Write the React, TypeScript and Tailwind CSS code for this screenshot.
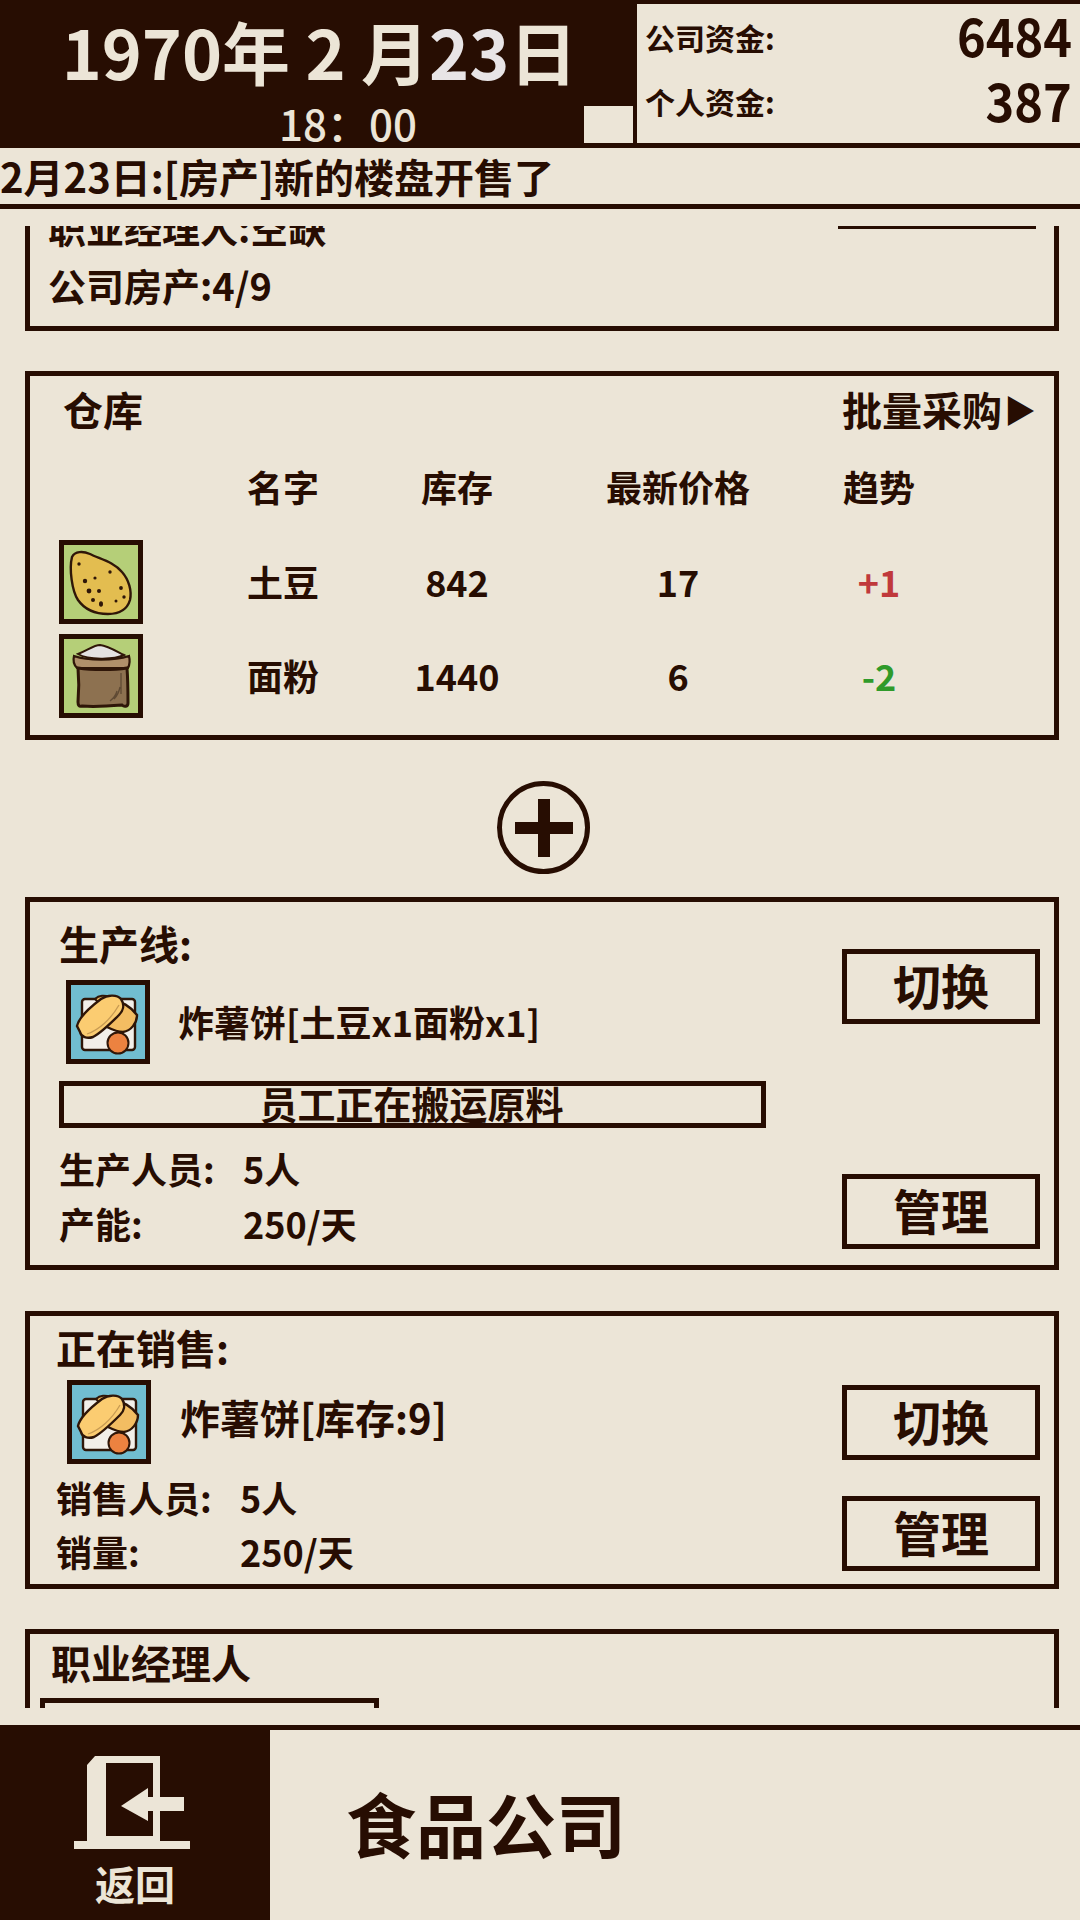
import React from 'react';

// --- ITEM ICONS ---
const Potato = () => (
  <svg viewBox="0 0 74 74" className="block h-full w-full">
    <rect width="74" height="74" fill="#b5cf78" />
    <path d="M8 12 C11 6 19 6 26 9 C36 14 50 17 58 27 C65 35 68 46 66 55 C63 65 54 69 44 69 C32 69 21 65 14 55 C8 46 5 24 8 12 Z" fill="#e3bd50" stroke="#2f1608" strokeWidth="2.4" />
    <g fill="#2f1608">
      <circle cx="15" cy="19" r="1.7" /><circle cx="46" cy="27" r="1.7" /><circle cx="31" cy="33" r="1.6" />
      <circle cx="21" cy="36" r="2.2" /><circle cx="57" cy="43" r="1.9" /><circle cx="35" cy="46" r="2" />
      <circle cx="25" cy="46" r="2.4" /><circle cx="60" cy="52" r="1.7" /><circle cx="29" cy="55" r="2" />
      <circle cx="52" cy="56" r="1.5" /><ellipse cx="37" cy="59" rx="2" ry="2.8" />
    </g>
  </svg>
);

const Sack = () => (
  <svg viewBox="0 0 74 74" className="block h-full w-full">
    <rect width="74" height="74" fill="#b5cf78" />
    <path d="M14 15 C24 11 30 6 36 6 C44 7 52 12 60 16 C50 21 24 21 14 15 Z" fill="#e4e2e2" stroke="#2f1608" strokeWidth="2" />
    <path d="M10 17 C24 22 50 22 65 17 C66 21 66 25 64 29 L13 29 C10 26 9 21 10 17 Z" fill="#b0906a" stroke="#2f1608" strokeWidth="2.2" />
    <path d="M14 29 C28 31 50 31 63 29 C64 42 64 55 64 64 C64 68 60 68 58 66 C46 67 30 68 18 67 C15 68 14 66 14 63 C15 52 15 40 14 29 Z" fill="#8d7150" stroke="#2f1608" strokeWidth="3" />
    <path d="M57 34 L57 55 M50 60 C53 57 55 53 56 48 M46 62 C50 59 52 56 53 52" fill="none" stroke="#5f4a34" strokeWidth="1.3" />
  </svg>
);

const Fries = () => (
  <svg viewBox="0 0 74 74" className="block h-full w-full">
    <rect width="74" height="74" fill="#71bdd0" />
    <rect x="11" y="14" width="53" height="51" rx="3" fill="#f2efe9" stroke="#2f1608" strokeWidth="2.4" />
    <path d="M24 14 C28 10 34 10 38 12 L30 20 Z" fill="#f3bd62" stroke="#2f1608" strokeWidth="2" />
    <path d="M40 16 C50 15 60 22 66 30 C66 38 60 46 52 47 C46 47 40 44 36 42 Z" fill="#f3bd62" stroke="#2f1608" strokeWidth="2.4" />
    <path d="M6 41 C8 32 22 20 30 14 C36 10 46 9 50 14 C54 20 52 26 48 30 C40 38 30 48 22 52 C16 54 10 52 9 47 Z" fill="#fbcc71" stroke="#2f1608" strokeWidth="2.4" />
    <path d="M16 49 C28 45 40 34 48 20" fill="none" stroke="#c79a52" strokeWidth="1.3" />
    <circle cx="47" cy="58" r="10.5" fill="#ec8240" stroke="#2f1608" strokeWidth="2" />
  </svg>
);

const IconBox = ({ children, className = '' }: { children: React.ReactNode; className?: string }) => (
  <div className={`h-[84px] w-[84px] shrink-0 border-[5px] border-[#270d02] ${className}`}>{children}</div>
);

const ActionButton = ({ label }: { label: string }) => (
  <div className="flex h-[75px] w-[198px] items-center justify-center border-[5px] border-[#270d02] pb-[6px] text-[48px] leading-none font-bold">
    {label}
  </div>
);

const Card = ({ className = '', children }: { className?: string; children: React.ReactNode }) => (
  <div className={`mx-[25px] w-[1034px] border-[5px] border-[#270d02] ${className}`}>{children}</div>
);

const stockRows = [
  { icon: <Potato />, name: '土豆', stock: '842', price: '17', trend: '+1', color: 'text-[#c0393b]' },
  { icon: <Sack />, name: '面粉', stock: '1440', price: '6', trend: '-2', color: 'text-[#2f9a2a]' },
];

// --- MAIN ---
export default function App() {
  return (
    <div className="flex h-[1920px] w-[1080px] flex-col overflow-hidden bg-[#ece5d7] font-['Noto_Sans_CJK_SC',sans-serif] font-bold text-[#270d02]">
      {/* top date + money */}
      <div className="flex h-[148px] shrink-0 bg-[#270d02]">
        <div className="flex w-[584px] flex-col items-center text-[#ece5d7]">
          <div className="mt-[7px] ml-[55px] h-[88px] text-[68px] leading-[88px] whitespace-nowrap">1970年 2 月<span className="text-[#e8e4e6]">23</span>日</div>
          <div className="mt-[4px] ml-[112px] text-[42px] leading-[48px] font-medium whitespace-nowrap">18：00</div>
        </div>
        <div className="mt-[106px] h-[37px] w-[49px] bg-[#ece5d7]" />
        <div className="mt-[4px] mb-[5px] ml-[4px] flex w-[443px] flex-col bg-[#ece5d7] pr-[8px] pl-[8px]">
          <div className="mt-[1px] flex h-[64px] items-center justify-between">
            <span className="text-[30px]">公司资金:</span>
            <span className="origin-right -translate-y-[3px] scale-x-[0.92] text-[53px] leading-none">6484</span>
          </div>
          <div className="flex h-[64px] items-center justify-between">
            <span className="text-[30px]">个人资金:</span>
            <span className="origin-right -translate-y-[2px] scale-x-[0.92] text-[53px] leading-none">387</span>
          </div>
        </div>
      </div>

      {/* news */}
      <div className="flex h-[61px] shrink-0 items-center border-b-[5px] border-[#270d02] text-[40px] whitespace-nowrap">
        2月23日:[房产]新的楼盘开售了
      </div>

      {/* scrolling list */}
      <div className="mt-[17px] h-[1482px] shrink-0 overflow-hidden">
        <Card className="-mt-[25px] flex h-[130px] justify-between">
          <div className="pl-[18px] text-[38px] leading-[58px]">
            <div className="-mt-[8px]">职业经理人:空缺</div>
            <div>公司房产:4/9</div>
          </div>
          <div className="mr-[18px] h-[23px] w-[198px] border-b-[3px] border-[#270d02]" />
        </Card>

        <Card className="mt-[40px] h-[369px]">
          <div className="flex h-[66px] items-center justify-between pr-[18px] pl-[33px] text-[40px]">
            <span>仓库</span>
            <span className="flex items-center">批量采购<span className="ml-[2px] text-[32px] leading-none">▶</span></span>
          </div>
          <div className="grid grid-cols-[144px_160px_188px_254px_148px] pl-[29px] text-center text-[36px]">
            <div className="flex h-[93px] items-center pb-[6px]" />
            <div className="flex h-[93px] items-center justify-center pb-[6px]">名字</div>
            <div className="flex h-[93px] items-center justify-center pb-[6px]">库存</div>
            <div className="flex h-[93px] items-center justify-center pb-[6px]">最新价格</div>
            <div className="flex h-[93px] items-center justify-center pb-[6px]">趋势</div>
            {stockRows.map(r => (
              <React.Fragment key={r.name}>
                <div className="flex h-[94px] items-center"><IconBox>{r.icon}</IconBox></div>
                <div className="flex h-[94px] items-center justify-center pb-[2px]">{r.name}</div>
                <div className="flex h-[94px] items-center justify-center pb-[2px]">{r.stock}</div>
                <div className="flex h-[94px] items-center justify-center pb-[2px]">{r.price}</div>
                <div className={`flex h-[94px] items-center justify-center pb-[2px] ${r.color}`}>{r.trend}</div>
              </React.Fragment>
            ))}
          </div>
        </Card>

        {/* add line */}
        <div className="flex h-[157px] items-start justify-center pt-[41px] pl-[6px]">
          <svg viewBox="0 0 93 93" className="h-[93px] w-[93px]">
            <circle cx="46.5" cy="46.5" r="44" fill="none" stroke="#270d02" strokeWidth="5" />
            <path d="M41 18h12v23h23v12H53v23H41V53H18V41h23z" fill="#270d02" />
          </svg>
        </div>

        {/* production */}
        <Card className="flex h-[373px] text-[36px]">
          <div className="flex w-[807px] flex-col pl-[29px]">
            <div className="mt-[16px] h-[50px] text-[40px] leading-[50px]">生产线:</div>
            <div className="mt-[12px] ml-[7px] flex items-center">
              <IconBox><Fries /></IconBox>
              <span className="mt-[-2px] ml-[28px]">炸薯饼[土豆x1面粉x1]</span>
            </div>
            <div className="mt-[17px] flex h-[47px] w-[707px] items-center justify-center border-[5px] border-[#270d02] pr-[2px] pb-[4px] text-[38px] leading-none">
              员工正在搬运原料
            </div>
            <div className="mt-[12px] flex h-[55px] items-center"><span className="w-[184px]">生产人员:</span><span>5人</span></div>
            <div className="flex h-[55px] items-center"><span className="w-[184px]">产能:</span><span>250/天</span></div>
          </div>
          <div className="ml-[5px] flex flex-col justify-between pt-[47px] pb-[16px]">
            <ActionButton label="切换" />
            <ActionButton label="管理" />
          </div>
        </Card>

        {/* sales */}
        <Card className="mt-[41px] flex h-[278px] text-[36px]">
          <div className="flex w-[807px] flex-col pl-[26px]">
            <div className="mt-[6px] h-[50px] text-[40px] leading-[50px]">正在销售:</div>
            <div className="mt-[8px] ml-[11px] flex items-center">
              <IconBox><Fries /></IconBox>
              <span className="mt-[-11px] ml-[29px] text-[40px]">炸薯饼[库存:9]</span>
            </div>
            <div className="mt-[6px] flex h-[54px] items-center"><span className="w-[184px]">销售人员:</span><span>5人</span></div>
            <div className="flex h-[54px] items-center"><span className="w-[184px]">销量:</span><span>250/天</span></div>
          </div>
          <div className="ml-[5px] flex flex-col justify-between pt-[69px] pb-[13px]">
            <ActionButton label="切换" />
            <ActionButton label="管理" />
          </div>
        </Card>

        {/* manager, cut by the scroll edge */}
        <Card className="mt-[40px] h-[200px] text-[40px]">
          <div className="pl-[21px] leading-[56px]">职业经理人</div>
          <div className="mt-[8px] ml-[10px] h-[80px] w-[339px] border-[5px] border-[#270d02]" />
        </Card>
      </div>

      {/* bottom bar */}
      <div className="mt-[17px] flex h-[195px] shrink-0 border-t-[5px] border-[#270d02]">
        <div className="flex w-[270px] flex-col items-center bg-[#270d02] text-[#ece5d7]">
          <svg viewBox="0 0 116 93" className="mt-[26px] ml-[-6px] h-[93px] w-[116px]">
            <path d="M13 85V9L21 0H86V85H116V93H0V85ZM32 7V80H79V7Z" fill="#ece5d7" fillRule="evenodd" />
            <path d="M47 50L74 32V41H79V55H74V65Z" fill="#ece5d7" />
            <path d="M79 41H110V55H79Z" fill="#ece5d7" />
          </svg>
          <div className="mt-[9px] text-[40px] leading-[50px]">返回</div>
        </div>
        <div className="ml-[76px] flex items-center pb-[6px] text-[70px]">食品公司</div>
      </div>
    </div>
  );
}
